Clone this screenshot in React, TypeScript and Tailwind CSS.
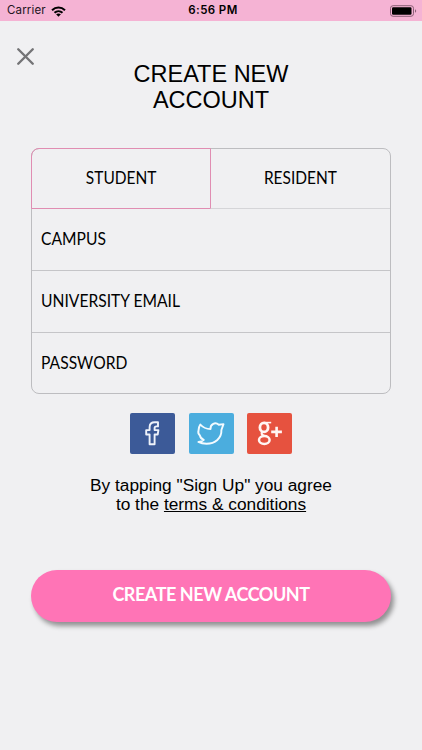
import { X } from 'lucide-react';

const fields = ['CAMPUS', 'UNIVERSITY EMAIL', 'PASSWORD'];

function StatusBar() {
  return (
    <div className="grid h-[21px] grid-cols-3 items-center bg-[#f5b3d4] pl-[7px] pr-[5px] font-['Inter',sans-serif] text-[11.5px] text-[#24151e]">
      <div className="flex items-center gap-[5px] pt-px">
        <span className="tracking-[0.15px]">Carrier</span>
        <svg width="15" height="11" viewBox="0 0 15 11" fill="none" stroke="black" strokeWidth="2">
          <path d="M1 4.2C4.8.5 10.2.5 14 4.2" />
          <path d="M3.5 6.8c2.3-2.2 5.7-2.2 8 0" />
          <path d="M5.1 8.3c1.4-1.2 3.4-1.2 4.8 0L7.5 10.8z" fill="black" stroke="none" />
        </svg>
      </div>
      <span className="pl-[2px] pt-px text-center font-semibold tracking-[0.4px] text-black">6:56 PM</span>
      <svg className="justify-self-end" width="27" height="12" viewBox="0 0 27 12">
        <rect x="0.5" y="0.7" width="23" height="10.6" rx="2.6" fill="none" stroke="#8b5f77" />
        <rect x="2" y="2.2" width="19.5" height="7.6" rx="1.2" fill="black" />
        <path d="M25 4.2c1.6.6 1.6 3 0 3.6z" fill="#8b5f77" />
      </svg>
    </div>
  );
}

function SocialButtons() {
  return (
    <div className="flex justify-center gap-[13.5px]">
      <button className="h-[40.5px] w-[45px] rounded-[2px] bg-[#3c5a98]">
        <svg width="45" height="40" viewBox="0 0 45 40" fill="none" stroke="#eef2fa" strokeWidth="1.9" strokeLinejoin="round">
          <path d="M28 9.2h-3.2c-3.5 0-5.2 2-5.2 5v2.9h-3.4v4.4h3.4v9.8h5v-9.8h3.1l.7-4.4h-3.8v-2c0-1.3.7-1.7 1.8-1.7H28z" />
        </svg>
      </button>
      <button className="h-[40.5px] w-[45px] rounded-[2px] bg-[#4badde]">
        <svg width="45" height="40" viewBox="0 0 45 40" fill="none" stroke="#f4fbff" strokeWidth="1.9" strokeLinejoin="round">
          <path d="M11.3 11.5c2.6 3 6 4.5 10.2 4.6-.3-5.3 4.9-7.3 8.3-4.3l4.700-.7-2.100 5.900c.4 8.200-6.300 13.700-14.800 13.700-3.200 0-6-.6-8.200-1.800 2.400-.1 4.100-.8 5.400-2.100-2.200-.7-3.500-2.200-3.900-4.300-1.600-1.500-2-3.100-1.400-4.900.1-2.200.5-4.300 1.800-6.100z" />
        </svg>
      </button>
      <button className="h-[40.5px] w-[45px] rounded-[2px] bg-[#e6523f]">
        <svg width="45" height="40" viewBox="0 0 45 40" fill="none" stroke="#fff5f3">
          <ellipse cx="17" cy="14.4" rx="4.1" ry="4.5" strokeWidth="2.8" />
          <path d="M17 9.6h7.2" strokeWidth="1.6" />
          <path d="M15.5 18.8c-2 1.7-.6 2.9 1.8 4.2" strokeWidth="2.2" />
          <ellipse cx="17.3" cy="27" rx="5.3" ry="3.9" strokeWidth="2.5" />
          <path d="M24.2 18.9h10.700M29.600 13.700v10.400" strokeWidth="2.6" />
        </svg>
      </button>
    </div>
  );
}

export default function App() {
  return (
    <div className="h-[750px] w-full overflow-hidden bg-[#f0f0f2] font-['Liberation_Sans',Arial,sans-serif] text-black">
      <StatusBar />

      <div className="flex h-[40px] items-end pl-[11px]">
        <button aria-label="Close" className="-mb-[10px]">
          <X size={29} strokeWidth={2} className="text-[#747476]" />
        </button>
      </div>

      <h1 className="text-center text-[23.5px] leading-[26px]">
        CREATE NEW
        <br />
        ACCOUNT
      </h1>

      <div className="mx-[31px] mt-[35px] h-[246px] rounded-[8px] border border-[#bdbdc0] font-['Lato',sans-serif] text-[16.3px]">
        <div className="flex h-[60px]">
          <button className="-ml-px -mt-px h-[61px] w-[180px] shrink-0 rounded-tl-[8px] border border-[#e08db2]">
            <span className="inline-block scale-x-[0.95]">STUDENT</span>
          </button>
          <button className="flex-1 border-b border-[#d5d5d8]">
            <span className="inline-block scale-x-[0.95]">RESIDENT</span>
          </button>
        </div>
        {fields.map((field) => (
          <div key={field} className="flex h-[62px] items-center border-b border-[#c5c5c8] pl-[9px] last:h-[61px] last:border-b-0">
            <span className="origin-left scale-x-[0.96]">{field}</span>
          </div>
        ))}
      </div>

      <div className="mt-[19px]">
        <SocialButtons />
      </div>

      <p className="mt-[22px] text-center text-[17.3px] leading-[19px]">
        By tapping "Sign Up" you agree
        <br />
        to the <a className="underline">terms &amp; conditions</a>
      </p>

      <div className="mx-[31px] mt-[56px]">
        <button className="h-[52px] w-full rounded-full bg-[#ff74b6] pb-[2px] font-['Lato',sans-serif] text-[18px] font-bold tracking-[-0.45px] text-white shadow-[3px_4px_5px_rgba(0,0,0,0.4)]">
          CREATE NEW ACCOUNT
        </button>
      </div>
    </div>
  );
}
